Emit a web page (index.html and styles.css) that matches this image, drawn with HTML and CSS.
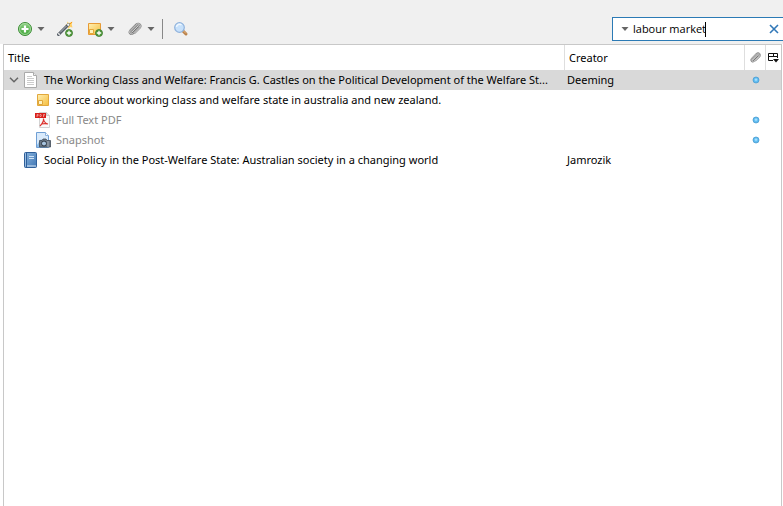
FILE: index.html
```html
<!DOCTYPE html>
<html lang="en">
<head>
<meta charset="utf-8">
<title>Library</title>
<link rel="stylesheet" href="styles.css">
</head>
<body>
<svg class="defs" width="0" height="0" aria-hidden="true">
  <defs>
    <linearGradient id="green" x1="0" y1="0" x2="0" y2="1"><stop offset="0" stop-color="#8fd184"/><stop offset="1" stop-color="#3da535"/></linearGradient>
    <linearGradient id="gold" x1="0" y1="0" x2="1" y2="1"><stop offset="0" stop-color="#fff0b4"/><stop offset="1" stop-color="#f5bd3c"/></linearGradient>
    <linearGradient id="book" x1="0" y1="0" x2="1" y2="1"><stop offset="0" stop-color="#8ab4dd"/><stop offset="1" stop-color="#3f76b4"/></linearGradient>
    <radialGradient id="dot"><stop offset="0" stop-color="#7fd0fa"/><stop offset="1" stop-color="#4fb0ea"/></radialGradient>
    <symbol id="plus" viewBox="0 0 8 8"><circle cx="4" cy="4" r="3.5" fill="#4f9a3a" stroke="#3f7b30" stroke-width=".8"/><path d="M4 1.8v4.4M1.8 4h4.4" stroke="#fff" stroke-width="1.3"/></symbol>
    <symbol id="clip" viewBox="0 0 16 16"><g fill="none" stroke-linecap="round" stroke-linejoin="round"><path d="M5 11l6-6c1.200-1 2.200.2 1.200 1.300l-6 6c-2 2-5-.5-3-2.800l6-6c2.500-2.300 6 .8 3.800 3.200l-5 5" stroke="#777" stroke-width="1.800"/><path d="M5 11l6-6c1.200-1 2.200.2 1.200 1.300l-6 6c-2 2-5-.5-3-2.800l6-6c2.500-2.300 6 .8 3.800 3.200l-5 5" stroke="#d8d8d8" stroke-width=".9"/></g></symbol>
    <symbol id="dotmark" viewBox="0 0 8 8"><circle cx="4" cy="4" r="3" fill="url(#dot)" stroke="#4f9fd3" stroke-width=".8"/><circle cx="4" cy="3.600" r="1.200" fill="#a4e0ff"/></symbol>
  </defs>
</svg>

<header class="toolbar">
  <div class="tools">
    <button class="tool menu" aria-label="New item">
      <svg width="16" height="16" viewBox="0 0 16 16"><circle cx="8" cy="8" r="6.500" fill="url(#green)" stroke="#3c8c35"/><circle cx="8" cy="8" r="5.500" fill="none" stroke="#b0deaa" stroke-width=".8"/><path d="M8 4.500v7M4.500 8h7" stroke="#fff" stroke-width="2.200"/></svg>
      <svg class="arrow" width="8" height="4" viewBox="0 0 8 4"><path d="M.5 0h7L4 4z"/></svg>
    </button>
    <button class="tool" aria-label="Add item by identifier">
      <svg width="16" height="16" viewBox="0 0 16 16"><path d="M10 .5l2 1.500 3.500-1.500-.8 3 .8 3-2.500-.5-1.500 2-1-3-2.500-1 2.500-1z" fill="#ffcf66"/><path d="M1.500 13.500L11.500 3.500" stroke="#555d66" stroke-width="3" stroke-linecap="round"/><path d="M3 11.500l6.500-6.500" stroke="#b4bac2" stroke-width="1"/><path d="M1.500 13.500l1-1M10.500 4.500l1.500-1.500" stroke="#f4f4f4" stroke-width="2"/><path d="M13 3l2-2" stroke="#f39a22"/><use href="#plus" x="8" y="8" width="8" height="8"/></svg>
    </button>
    <button class="tool menu" aria-label="New note">
      <svg width="16" height="16" viewBox="0 0 16 16"><path d="M1.500 2.500h12v11h-12z" fill="url(#gold)" stroke="#e79a35"/><path d="M2.500 12.500v-4h4v4z" fill="#fff2bd" stroke="#e5a738"/><use href="#plus" x="8" y="8" width="8" height="8"/></svg>
      <svg class="arrow" width="8" height="4" viewBox="0 0 8 4"><path d="M.5 0h7L4 4z"/></svg>
    </button>
    <button class="tool menu" aria-label="Add attachment">
      <svg width="16" height="16"><use href="#clip"/></svg>
      <svg class="arrow" width="8" height="4" viewBox="0 0 8 4"><path d="M.5 0h7L4 4z"/></svg>
    </button>
    <span class="divider"></span>
    <button class="tool" aria-label="Advanced search">
      <svg width="16" height="16" viewBox="0 0 16 16"><path d="M10 10l3 3" stroke="#b98048" stroke-width="3" stroke-linecap="round"/><path d="M10.500 10l2.500 2.500" stroke="#e9b985"/><circle cx="6.500" cy="6.500" r="4.800" fill="#c7e1fb" stroke="#8fb2dc" stroke-width="1.200"/><path d="M3.500 6a3 3 0 0 1 5-2" fill="none" stroke="#eef7ff" stroke-width="1.500"/></svg>
    </button>
  </div>
  <form class="search" role="search">
    <button class="mode" type="button" aria-label="Search mode"><svg class="arrow" width="8" height="4" viewBox="0 0 8 4"><path d="M.5 0h7L4 4z"/></svg></button>
    <input class="query" type="text" aria-label="Search" value="labour market">
    <span class="caret"></span>
    <button class="clear" type="button" aria-label="Clear search"><svg width="10" height="10" viewBox="0 0 10 10"><path d="M1 1l8 8M9 1L1 9" stroke="#3178b8" stroke-width="1.600"/></svg></button>
  </form>
</header>

<main class="items">
  <table>
    <colgroup><col><col class="col-creator"><col class="col-clip"><col class="col-picker"></colgroup>
    <thead>
      <tr>
        <th scope="col">Title</th>
        <th scope="col">Creator</th>
        <th scope="col" class="mark" aria-label="Attachments"><svg width="13" height="13"><use href="#clip"/></svg></th>
        <th class="mark"><button class="picker" aria-label="Choose columns"><svg width="11" height="11" viewBox="0 0 11 11"><path d="M5 8.500H.5v-7h9V6M0 4.500h10M5.500 1v4" fill="none" stroke="#111"/><path d="M5 7h6L8 10.500z" fill="#111"/></svg></button></th>
      </tr>
    </thead>
    <tbody>
      <tr class="selected">
        <td><div class="cell">
          <button class="twisty" aria-label="Collapse"><svg width="10" height="6" viewBox="0 0 10 6"><path d="M1 .8l4 4 4-4" fill="none" stroke="#666" stroke-width="1.500"/></svg></button>
          <svg class="icon" width="16" height="16" viewBox="0 0 16 16"><path d="M1.500.5h9l3 3v12h-12z" fill="#fff" stroke="#aaa"/><path d="M10.500.5v3h3" fill="#eee" stroke="#aaa"/><path d="M4 4.500h5M4 6.500h7M4 8.500h7M4 10.500h7M4 12.500h7" stroke="#ccc"/></svg>
          <span>The Working Class and Welfare: Francis G. Castles on the Political Development of the Welfare St...</span>
        </div></td>
        <td>Deeming</td>
        <td class="mark"><svg width="8" height="8"><use href="#dotmark"/></svg></td>
        <td></td>
      </tr>
      <tr>
        <td><div class="cell child">
          <svg class="icon" width="16" height="16" viewBox="0 0 16 16"><path d="M2.500 2.500h11v11h-11z" fill="url(#gold)" stroke="#e2a83c"/><path d="M3.500 12.500v-4h4v4z" fill="#fff4c4" stroke="#e0a63a"/></svg>
          <span>source about working class and welfare state in australia and new zealand.</span>
        </div></td>
        <td></td><td></td><td></td>
      </tr>
      <tr class="dim">
        <td><div class="cell child">
          <svg class="icon" width="16" height="16" viewBox="0 0 16 16"><path d="M4.500.5h7l3 3v12h-10z" fill="#fafafa" stroke="#d3d3d3"/><path d="M11.500.5v3h3" fill="#e6e6e6" stroke="#ccc"/><path d="M0 1h11v5H0z" fill="#d8201c"/><path d="M2 5V2.500h1.200v1.200H2M5 2.500v2h1l.5-1-.5-1zM8.500 5V2.500h1.500M8.500 3.700h1" fill="none" stroke="#f5b5b0" stroke-width=".7"/><path d="M8.500 6.500c.4 3-1.500 5.500-3.500 7.500M8.500 7c.5 3 2.500 4.500 4.500 5-2.500-.8-4.500-.5-6.500 0" fill="none" stroke="#dc3531" stroke-width="1.200"/></svg>
          <span>Full Text PDF</span>
        </div></td>
        <td></td>
        <td class="mark"><svg width="8" height="8"><use href="#dotmark"/></svg></td>
        <td></td>
      </tr>
      <tr class="dim">
        <td><div class="cell child">
          <svg class="icon" width="16" height="16" viewBox="0 0 16 16"><path d="M1.500.5h9l3 3v12h-12z" fill="#d9eafb" stroke="#6f9fd4"/><path d="M10.500.5v3h3" fill="#fff" stroke="#8bb2de"/><path d="M2 13l4-6 4 5v3H2z" fill="#90bfea"/><path d="M4.500 8.500H7l1-1.500h3l1 1.500h3.500v6.500h-11z" fill="#697786" stroke="#414b57" stroke-width=".8"/><circle cx="9" cy="11.500" r="2.500" fill="#a9c5df" stroke="#303944"/><path d="M13 9v6" stroke="#aab2bb"/></svg>
          <span>Snapshot</span>
        </div></td>
        <td></td>
        <td class="mark"><svg width="8" height="8"><use href="#dotmark"/></svg></td>
        <td></td>
      </tr>
      <tr>
        <td><div class="cell leaf">
          <svg class="icon" width="16" height="16" viewBox="0 0 16 16"><rect x="1.500" y=".5" width="12" height="15" rx="1" fill="url(#book)" stroke="#2f5f99"/><path d="M3.500 1v14" stroke="#2f5f99"/><path d="M2.500 1.500v13" stroke="#a9c9e8" stroke-width=".7"/><path d="M6 4.500h5M6 6.500h5" stroke="#cfe2f5"/><path d="M4 14h9" stroke="#dce9f6"/></svg>
          <span>Social Policy in the Post-Welfare State: Australian society in a changing world</span>
        </div></td>
        <td>Jamrozik</td><td></td><td></td>
      </tr>
    </tbody>
  </table>
</main>
</body>
</html>
```
FILE: styles.css
```css
* { box-sizing: border-box; }
html, body { height: 100%; }
body {
  margin: 0;
  display: flex;
  flex-direction: column;
  background: #fff;
  color: #000;
  font: 11px/16px "Noto Sans", "Open Sans", sans-serif;
  overflow: hidden;
}
.defs { position: absolute; }
button { border: 0; padding: 0; background: none; font: inherit; color: inherit; }
svg { display: block; flex: none; }

.toolbar {
  flex: none;
  display: flex;
  justify-content: space-between;
  align-items: center;
  padding: 14px 0 0 17px;
  height: 44px;
  background: #f0f0f0;
}
.tools { display: flex; align-items: center; }
.tool { display: flex; align-items: center; gap: 4px; margin-right: 14px; }
.tool.menu { margin-right: 12px; }
.arrow { fill: #666; }
.divider { width: 1px; height: 20px; margin: 0 10px 0 -5px; background: #888; }

.search {
  display: flex;
  align-items: center;
  width: 171px;
  height: 24px;
  padding: 0 4px 0 8px;
  border: 1px solid #2b7ab5;
  border-right: 0;
  background: #fff;
}
.mode { margin-right: 4px; }
.query {
  width: 72px;
  padding: 0;
  border: 0;
  outline: 0;
  background: none;
  font: inherit;
  font-family: "Open Sans", "Noto Sans", sans-serif;
  color: #000;
}
.caret { width: 1px; height: 15px; background: #000; }
.clear { margin-left: auto; }

.items {
  flex: 1;
  margin: 0 1px 0 3px;
  border: 1px solid #c8c8c8;
  border-bottom: 0;
}
table { width: 100%; table-layout: fixed; border-collapse: separate; border-spacing: 0; }
.col-creator { width: 180px; }
.col-clip { width: 21px; }
.col-picker { width: 15px; }
th {
  height: 25px;
  padding: 0 4px;
  border-right: 1px solid #dedede;
  font-weight: 400;
  text-align: left;
}
th:last-child { border-right: 0; }
td { height: 20px; padding: 0 2px; white-space: nowrap; }
th.mark, td.mark { padding: 0; }
.mark svg { margin: 0 auto; }
.picker { display: block; width: 100%; }
.selected td { background: #d9d9d9; }
.dim { color: #888; }
.cell { display: flex; align-items: center; }
.twisty { flex: none; width: 16px; }
.twisty svg { margin: 0 auto; }
.icon { margin: 0 5px 0 1px; }
.leaf { padding-left: 16px; }
.child { padding-left: 28px; }
```
